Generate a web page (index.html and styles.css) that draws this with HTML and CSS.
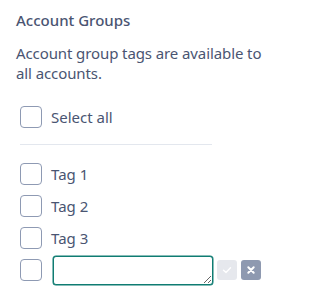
FILE: index.html
```html
<!DOCTYPE html>
<html>
<head>
<meta charset="utf-8">
<link rel="stylesheet" href="styles.css">
</head>
<body>
<div class="panel">
  <h3 class="title">Account Groups</h3>
  <p class="desc">Account group tags are available to all accounts.</p>
  <div class="list">
    <label class="row"><span class="box"></span><span class="label">Select all</span></label>
    <div class="divider"></div>
    <div class="tags">
      <label class="row"><span class="box"></span><span class="label">Tag 1</span></label>
      <label class="row"><span class="box"></span><span class="label">Tag 2</span></label>
      <label class="row"><span class="box"></span><span class="label">Tag 3</span></label>
      <div class="row">
        <span class="box"></span>
        <textarea class="input"></textarea>
        <span class="btn btn-ok"><svg width="10" height="10" viewBox="0 0 10 10"><path d="M1.5 5.2 L4 7.5 L8.5 2.8" fill="none" stroke="#fff" stroke-width="1.4" stroke-linecap="round" stroke-linejoin="round"/></svg></span>
        <span class="btn btn-cancel"><svg width="10" height="10" viewBox="0 0 10 10"><path d="M2.3 2.3 L7.7 7.7 M7.7 2.3 L2.3 7.7" fill="none" stroke="#fff" stroke-width="2" stroke-linecap="round"/></svg></span>
      </div>
    </div>
  </div>
</div>
</body>
</html>
```

FILE: styles.css
```css
html, body {
  margin: 0;
  padding: 0;
  background: #fff;
}
body {
  font-family: "Noto Sans", "Open Sans", sans-serif;
  color: #4a5572;
}
.panel {
  width: 292px;
  padding: 10px 16px;
  box-sizing: border-box;
}
.title {
  margin: 0;
  font-size: 15px;
  line-height: 20px;
  font-weight: 500;
}
.desc {
  margin: 13px 0 0;
  max-width: 258px;
  font-size: 15px;
  letter-spacing: -0.1px;
  line-height: 20px;
}
.list {
  margin-top: 23px;
  padding-left: 4px;
}
.row {
  display: flex;
  align-items: center;
  height: 22px;
}
.box {
  width: 20px;
  height: 20px;
  border: 1px solid #8e9ab3;
  border-radius: 4px;
  flex: none;
}
.label {
  margin-left: 9px;
  font-size: 15px;
  line-height: 20px;
}
.divider {
  width: 192px;
  height: 1px;
  background: #e3e7ee;
  margin: 16px 0 18px;
}
.tags {
  display: flex;
  flex-direction: column;
  gap: 10px;
}
.input {
  margin: 0 0 0 11px;
  width: 160px;
  height: 29px;
  box-sizing: border-box;
  border: 1px solid #0f7c72;
  box-shadow: 0 0 0 0.5px #0f7c72;
  border-radius: 3px;
  padding: 2px 4px;
  font-family: inherit;
  font-size: 14px;
  outline: none;
  flex: none;
}
.btn {
  width: 20px;
  height: 20px;
  border-radius: 3px;
  display: flex;
  align-items: center;
  justify-content: center;
  flex: none;
}
.btn-ok {
  margin-left: 4px;
  background: #e6e8ed;
}
.btn-cancel {
  margin-left: 4px;
  background: #8e99b0;
}
```
